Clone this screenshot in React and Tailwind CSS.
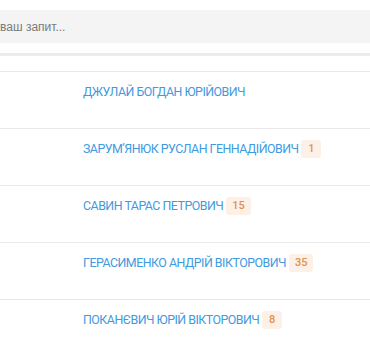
const people = [
  { name: 'ДЖУЛАЙ БОГДАН ЮРІЙОВИЧ', count: null },
  { name: 'ЗАРУМ\u2019ЯНЮК РУСЛАН ГЕННАДІЙОВИЧ', count: 1 },
  { name: 'САВИН ТАРАС ПЕТРОВИЧ', count: 15 },
  { name: 'ГЕРАСИМЕНКО АНДРІЙ ВІКТОРОВИЧ', count: 35 },
  { name: 'ПОКАНЄВИЧ ЮРІЙ ВІКТОРОВИЧ', count: 8 },
];

export default function App() {
  return (
    <div className="w-[370px] h-[355px] overflow-hidden bg-white">
      <div className="pt-[10px] pb-[10px]">
        <div className="h-[33px] bg-[#f4f4f4] flex items-center text-[12px] text-[#7a7a7a] font-['Liberation_Sans',Arial,sans-serif]">
          ваш запит...
        </div>
      </div>
      <div className="border-t-[3px] border-[#ebebeb]" />
      <div className="h-[15px]" />
      {people.map((p) => (
        <div
          key={p.name}
          className="h-[57px] border-t border-[#e9e9e9] pl-[83px] pt-[11px] font-['Roboto',sans-serif]"
        >
          <div className="flex items-center gap-[3px] h-[18px]">
            <a href="#" className="text-[12.4px] tracking-[-0.5px] text-[#3f9ae0] leading-none">
              {p.name}
            </a>
            {p.count !== null && (
              <span className="h-[18px] min-w-[20px] px-[6px] rounded-[3px] bg-[#fdf0e6] text-[#e0904f] text-[11px] font-medium flex items-center justify-center">
                {p.count}
              </span>
            )}
          </div>
        </div>
      ))}
    </div>
  );
}
